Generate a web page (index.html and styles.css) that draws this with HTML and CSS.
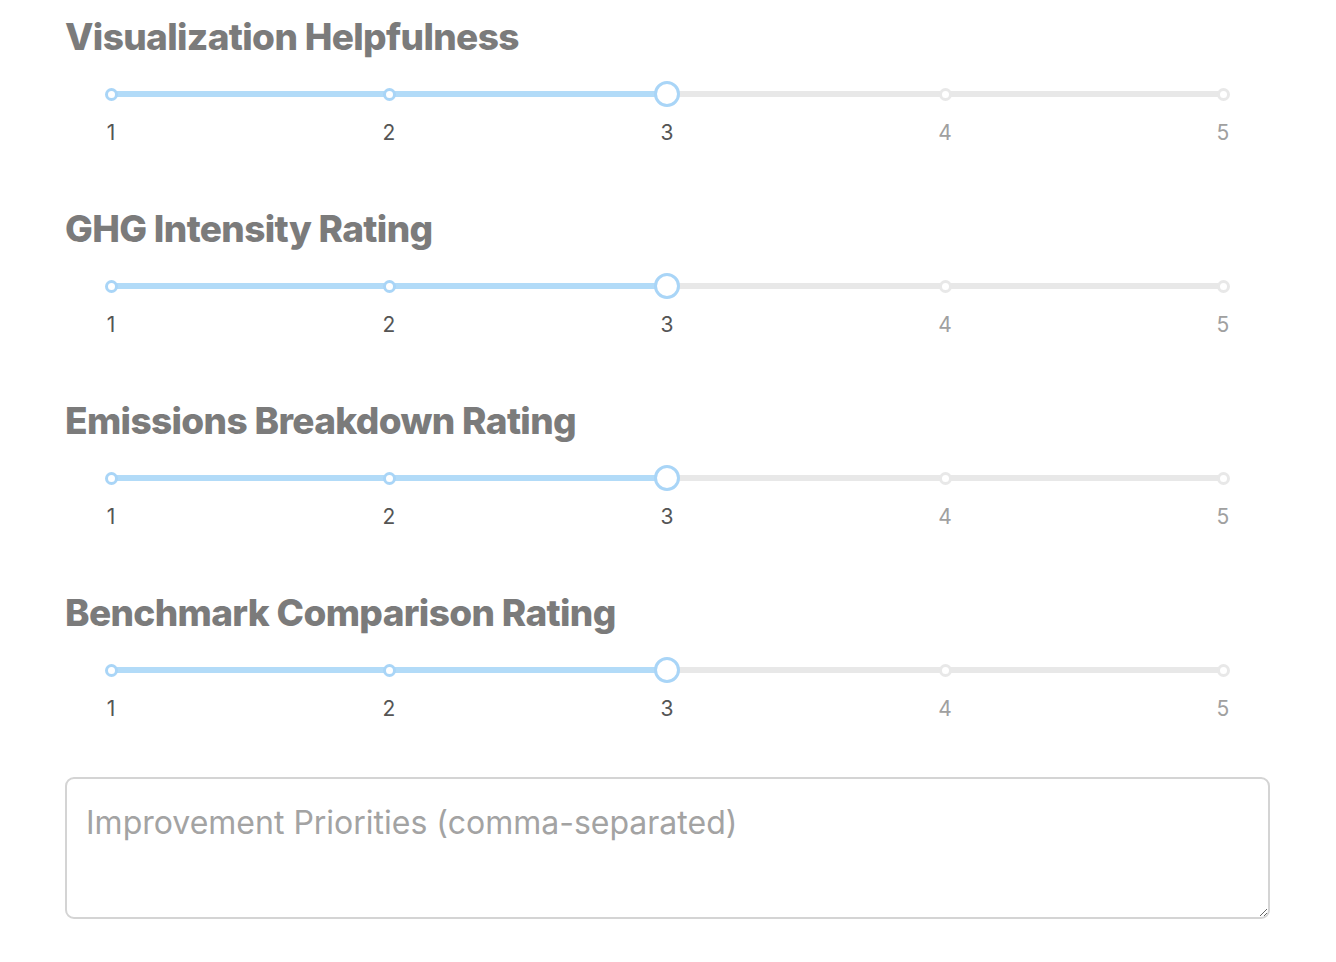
FILE: index.html
```html
<!DOCTYPE html>
<html lang="en">
<head>
<meta charset="utf-8">
<title>Ratings</title>
<link rel="stylesheet" href="styles.css">
</head>
<body>
<main class="form">
  <section class="rating">
    <h2 class="rating-title">Visualization Helpfulness</h2>
    <div class="slider">
      <div class="rail">
        <div class="fill" style="width:50%"></div>
        <span class="dot on"></span><span class="dot on"></span><span class="thumb"></span><span class="dot"></span><span class="dot"></span>
      </div>
      <div class="marks">
        <span class="mark on">1</span><span class="mark on">2</span><span class="mark on">3</span><span class="mark">4</span><span class="mark">5</span>
      </div>
    </div>
  </section>
  <section class="rating">
    <h2 class="rating-title">GHG Intensity Rating</h2>
    <div class="slider">
      <div class="rail">
        <div class="fill" style="width:50%"></div>
        <span class="dot on"></span><span class="dot on"></span><span class="thumb"></span><span class="dot"></span><span class="dot"></span>
      </div>
      <div class="marks">
        <span class="mark on">1</span><span class="mark on">2</span><span class="mark on">3</span><span class="mark">4</span><span class="mark">5</span>
      </div>
    </div>
  </section>
  <section class="rating">
    <h2 class="rating-title">Emissions Breakdown Rating</h2>
    <div class="slider">
      <div class="rail">
        <div class="fill" style="width:50%"></div>
        <span class="dot on"></span><span class="dot on"></span><span class="thumb"></span><span class="dot"></span><span class="dot"></span>
      </div>
      <div class="marks">
        <span class="mark on">1</span><span class="mark on">2</span><span class="mark on">3</span><span class="mark">4</span><span class="mark">5</span>
      </div>
    </div>
  </section>
  <section class="rating">
    <h2 class="rating-title">Benchmark Comparison Rating</h2>
    <div class="slider">
      <div class="rail">
        <div class="fill" style="width:50%"></div>
        <span class="dot on"></span><span class="dot on"></span><span class="thumb"></span><span class="dot"></span><span class="dot"></span>
      </div>
      <div class="marks">
        <span class="mark on">1</span><span class="mark on">2</span><span class="mark on">3</span><span class="mark">4</span><span class="mark">5</span>
      </div>
    </div>
  </section>
  <textarea class="priorities" placeholder="Improvement Priorities (comma-separated)"></textarea>
</main>
</body>
</html>
```

FILE: styles.css
```css
html, body {
  margin: 0;
  padding: 0;
  background: #ffffff;
}

body {
  font-family: Inter, "Noto Sans", "Liberation Sans", sans-serif;
}

.form {
  width: 1205px;
  margin-left: 65px;
  padding-top: 15px;
  display: flex;
  flex-direction: column;
  gap: 62px;
}

.rating {
  display: flex;
  flex-direction: column;
}

.rating-title {
  margin: 0;
  font-size: 37px;
  line-height: 44px;
  font-weight: 800;
  letter-spacing: -0.65px;
  color: #7b7b7b;
}

.slider {
  margin: 32px 47px 0 46px;
  display: flex;
  flex-direction: column;
  gap: 24px;
}

.rail {
  position: relative;
  height: 6px;
  border-radius: 3px;
  background: #e8e8e8;
  display: flex;
  justify-content: space-between;
  align-items: center;
}

.fill {
  position: absolute;
  left: 0;
  top: 0;
  height: 6px;
  border-radius: 3px;
  background: #b2dbf8;
}

.dot {
  position: relative;
  box-sizing: border-box;
  width: 13px;
  height: 13px;
  margin: 0 -6.5px;
  border: 3px solid #e8e8e8;
  border-radius: 50%;
  background: #ffffff;
}

.dot.on {
  border-color: #a9d5f7;
}

.thumb {
  position: relative;
  box-sizing: border-box;
  width: 26px;
  height: 26px;
  margin: 0 -13px;
  border: 3px solid #a9d5f7;
  border-radius: 50%;
  background: #ffffff;
}

.marks {
  display: flex;
  justify-content: space-between;
}

.mark {
  width: 0;
  display: flex;
  justify-content: center;
  font-size: 21px;
  line-height: 24px;
  color: #a0a0a0;
}

.mark.on {
  color: #555555;
}

.priorities {
  box-sizing: border-box;
  width: 1205px;
  height: 142px;
  margin-top: -6px;
  padding: 24px 19px;
  border: 2px solid #d4d4d4;
  border-radius: 9px;
  font-family: Inter, "Noto Sans", "Liberation Sans", sans-serif;
  font-size: 32px;
  line-height: 40px;
  color: #333333;
  resize: vertical;
  outline: none;
}

.priorities::placeholder {
  color: #a3a3a3;
}
```
